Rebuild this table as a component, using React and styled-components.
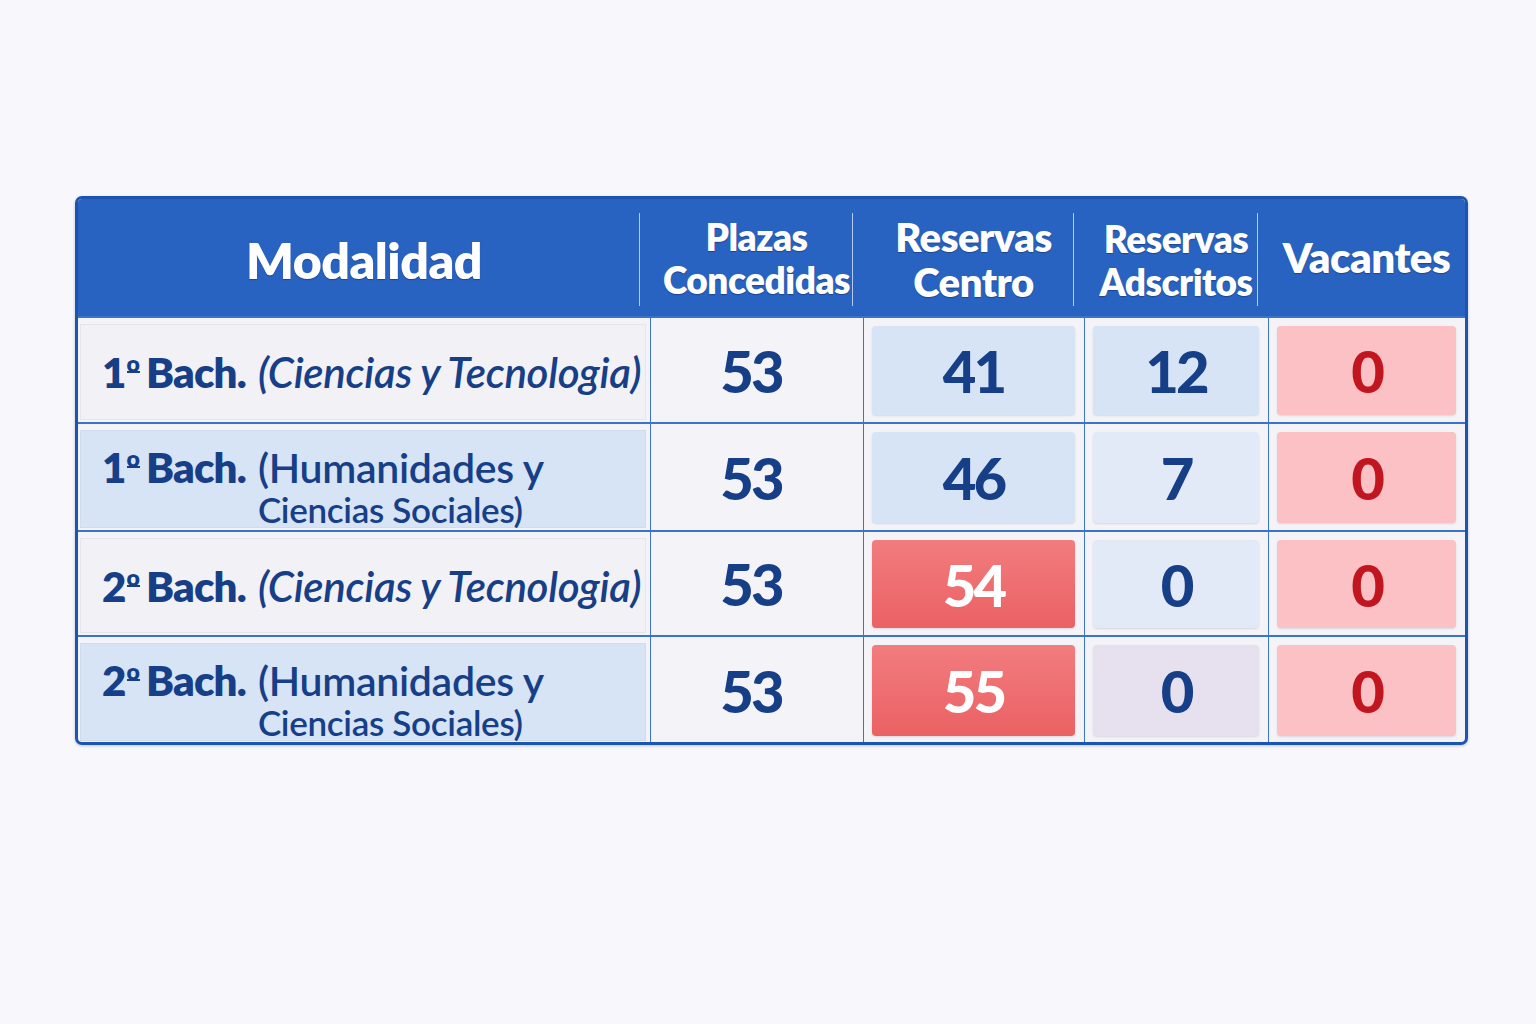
import React from 'react';
import styled, { createGlobalStyle } from 'styled-components';

const GlobalStyle = createGlobalStyle`
  html, body {
    margin: 0;
    padding: 0;
    background: #f8f7fb;
  }
  body {
    font-family: Lato, "Open Sans", sans-serif;
  }
`;

const COLS = '572px 213px 221px 184px 1fr';

const Page = styled.div`
  width: 1536px;
  height: 1024px;
  padding: 196px 68px 0 75px;
  box-sizing: border-box;
`;

const Table = styled.div`
  box-sizing: border-box;
  width: 1393px;
  border: 3px solid #1c55b0;
  border-radius: 7px;
  overflow: hidden;
  background: #f4f3f7;
  box-shadow: 0 1px 3px rgba(20, 50, 110, 0.25);
`;

const HeaderRow = styled.div`
  display: grid;
  grid-template-columns: ${COLS};
  height: 117px;
  background: #2963c1;
`;

const HeadCell = styled.div`
  position: relative;
  display: flex;
  flex-direction: column;
  align-items: center;
  justify-content: center;
  color: #ffffff;
  font-weight: 800;
  font-size: ${(p) => p.$size || 40}px;
  line-height: ${(p) => p.$lh || 43}px;
  letter-spacing: -0.5px;
  text-align: center;
  text-shadow: 0 1px 1px rgba(10, 30, 80, 0.45);
  padding-top: ${(p) => p.$pt || 0}px;

  &::before {
    content: '';
    display: ${(p) => (p.$divider ? 'block' : 'none')};
    position: absolute;
    left: -11px;
    top: 14px;
    bottom: 10px;
    width: 1px;
    background: rgba(225, 235, 255, 0.75);
  }
`;

const Row = styled.div`
  display: grid;
  grid-template-columns: ${COLS};
  height: ${(p) => p.$h}px;
  border-top: 2px solid #3a72cc;
`;

const LabelCell = styled.div`
  padding: 6px 4px 2px 2px;
  display: flex;
`;

const LabelPanel = styled.div`
  flex: 1;
  display: flex;
  align-items: ${(p) => (p.$twoLine ? 'flex-start' : 'center')};
  padding: ${(p) => (p.$twoLine ? '11px 0 0 21px' : '0 0 0 21px')};
  background: ${(p) => (p.$tint ? '#d6e4f6' : '#f2f1f5')};
  border: 1px solid ${(p) => (p.$tint ? '#cddcf1' : '#e6e5ec')};
  color: #173f88;
`;

const LabelLine = styled.div`
  display: flex;
  align-items: baseline;
`;

const Course = styled.span`
  font-weight: 800;
  font-size: 42px;
  letter-spacing: -0.8px;
  margin-right: 12px;
  white-space: nowrap;
`;

const Ord = styled.span`
  display: inline-block;
  font-size: 23px;
  line-height: 16px;
  vertical-align: 16px;
  border-bottom: 2.5px solid currentColor;
  margin: 0 6px 0 1px;
  letter-spacing: 0;
`;

const Paren = styled.span`
  font-style: ${(p) => (p.$italic ? 'italic' : 'normal')};
  font-size: ${(p) => (p.$italic ? 42 : 41)}px;
  font-weight: 600;
  white-space: nowrap;
  letter-spacing: -0.3px;
`;

const ParenStack = styled.div`
  display: flex;
  flex-direction: column;
`;

const ParenSub = styled.span`
  font-size: 35px;
  font-weight: 600;
  line-height: 35px;
  white-space: nowrap;
  letter-spacing: -0.3px;
`;

const NumCell = styled.div`
  border-left: 1px solid #3a72cc;
  padding: ${(p) => (p.$boxed ? '8px 9px 7px 8px' : '0 12px 0 0')};
  display: flex;
  align-items: stretch;
`;

const palette = {
  plain: { bg: 'transparent', fg: '#173f88' },
  blue: { bg: '#d6e4f6', fg: '#173f88' },
  pale: { bg: '#e2eaf7', fg: '#173f88' },
  lilac: { bg: '#e7e1ef', fg: '#173f88' },
  red: { bg: 'linear-gradient(180deg, #f27c7e 0%, #eb6164 100%)', fg: '#ffffff' },
  pink: { bg: '#fbc1c5', fg: '#c11520' },
};

const NumBox = styled.div`
  flex: 1;
  display: flex;
  align-items: center;
  justify-content: center;
  border-radius: 4px;
  background: ${(p) => palette[p.$tone].bg};
  color: ${(p) => palette[p.$tone].fg};
  font-weight: 900;
  font-size: 58px;
  letter-spacing: -3px;
  box-shadow: ${(p) => (p.$tone === 'plain' ? 'none' : '0 1px 2px rgba(60, 60, 90, 0.15)')};
`;

const rows = [
  { h: 104, n: '1', italic: '(Ciencias y Tecnologia)', tint: false, vals: [['53', 'plain'], ['41', 'blue'], ['12', 'blue'], ['0', 'pink']] },
  { h: 106, n: '1', lines: ['(Humanidades y', 'Ciencias Sociales)'], tint: true, vals: [['53', 'plain'], ['46', 'blue'], ['7', 'pale'], ['0', 'pink']] },
  { h: 103, n: '2', italic: '(Ciencias y Tecnologia)', tint: false, vals: [['53', 'plain'], ['54', 'red'], ['0', 'pale'], ['0', 'pink']] },
  { h: 105, n: '2', lines: ['(Humanidades y', 'Ciencias Sociales)'], tint: true, vals: [['53', 'plain'], ['55', 'red'], ['0', 'lilac'], ['0', 'pink']] },
];

const App = () => {
  return (
    <Page>
      <GlobalStyle />
      <Table>
        <HeaderRow>
          <HeadCell $size={50} $pt={6}>Modalidad</HeadCell>
          <HeadCell $divider $size={37}>
            <span>Plazas</span>
            <span>Concedidas</span>
          </HeadCell>
          <HeadCell $divider $size={40} $lh={45} $pt={4}>
            <span>Reservas</span>
            <span>Centro</span>
          </HeadCell>
          <HeadCell $divider $size={37} $pt={4}>
            <span>Reservas</span>
            <span>Adscritos</span>
          </HeadCell>
          <HeadCell $divider $size={42}>Vacantes</HeadCell>
        </HeaderRow>
        {rows.map((r, i) => (
          <Row key={i} $h={r.h}>
            <LabelCell>
              <LabelPanel $tint={r.tint} $twoLine={!!r.lines}>
                <LabelLine>
                  <Course>
                    {r.n}
                    <Ord>o</Ord>Bach.
                  </Course>
                  {r.lines ? (
                    <ParenStack>
                      <Paren>{r.lines[0]}</Paren>
                      <ParenSub>{r.lines[1]}</ParenSub>
                    </ParenStack>
                  ) : (
                    <Paren $italic>{r.italic}</Paren>
                  )}
                </LabelLine>
              </LabelPanel>
            </LabelCell>
            {r.vals.map(([v, tone], j) => (
              <NumCell key={j} $boxed={tone !== 'plain'}>
                <NumBox $tone={tone}>{v}</NumBox>
              </NumCell>
            ))}
          </Row>
        ))}
      </Table>
    </Page>
  );
};

export default App;
